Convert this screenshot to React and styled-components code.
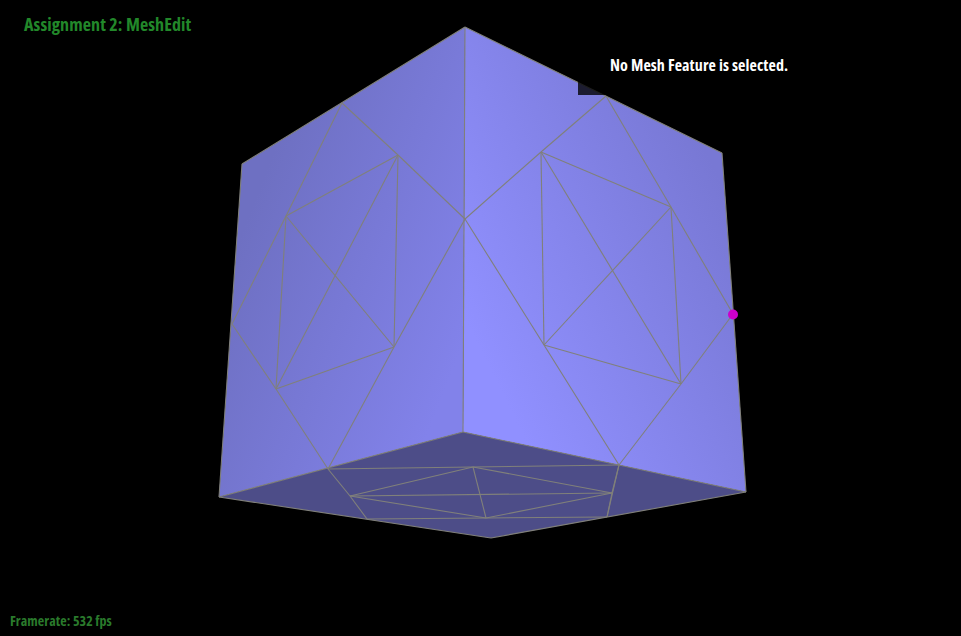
import React from "react";
import styled, { createGlobalStyle } from "styled-components";

const W = 961;
const H = 636;

const GlobalStyle = createGlobalStyle`
	html, body {
		margin: 0;
		padding: 0;
		background: #000;
	}
`;

const Stage = styled.div`
	position: relative;
	width: ${W}px;
	height: ${H}px;
	overflow: hidden;
	background: #000;
	font-family: "Open Sans", "Noto Sans", sans-serif;
	font-weight: 700;
	font-stretch: condensed;
`;

const Viewport = styled.svg`
	display: block;
`;

const Title = styled.h1`
	position: absolute;
	left: 24px;
	top: 12px;
	margin: 0;
	font-size: 18px;
	line-height: 24px;
	font-weight: 700;
	letter-spacing: 0.1px;
	color: #22882a;
	white-space: nowrap;
`;

const Framerate = styled.div`
	position: absolute;
	left: 10px;
	bottom: 6px;
	font-size: 14px;
	line-height: 18px;
	letter-spacing: 0.05px;
	color: #2a7a2c;
	white-space: nowrap;
`;

const InfoPanel = styled.div`
	position: absolute;
	left: 578px;
	top: 40px;
	width: 340px;
	height: 55px;
	box-sizing: border-box;
	padding: 14px 0 0 32px;
	background: rgba(0, 0, 0, 0.78);
	font-size: 16px;
	line-height: 22px;
	letter-spacing: 0.1px;
	color: #fff;
	white-space: nowrap;
`;

const v = {
	A: [465, 27], B: [242, 164], C: [219, 497], D: [463, 432],
	E: [722, 153], F: [746, 492], G: [491, 538],
	P1: [342, 103], P2: [398, 155], P3: [465, 219], P4: [286, 216],
	P6: [232, 324], P7: [276, 389], P8: [394, 347], P9: [328, 469],
	Q1: [606, 96], Q2: [541, 152], Q3: [671, 207], Q5: [544, 345],
	Q6: [681, 384], Q7: [733, 314], Q8: [619, 465],
	R1: [350, 496], R2: [367, 519], R3: [473, 467], R4: [486, 518],
	R5: [612, 493], R6: [607, 517],
};

const FACES = [
	{ pts: ["A", "B", "C", "D"], fill: "url(#leftFace)" },
	{ pts: ["A", "E", "F", "D"], fill: "url(#rightFace)" },
	{ pts: ["C", "D", "F", "G"], fill: "#4d4d88" },
];

const EDGES = [
	"A-B", "B-C", "C-D", "D-A", "A-E", "E-F", "F-D", "C-G", "G-F",
	"P1-P2", "P2-P3", "P1-P4", "P4-P2", "P4-P6", "P4-P7", "P4-P8", "P2-P7", "P2-P8",
	"P6-P7", "P7-P8", "P7-P9", "P8-P9", "P8-P3",
	"Q1-Q2", "Q2-P3", "Q1-Q3", "Q2-Q3", "Q2-Q5", "Q2-Q6", "Q3-Q5", "Q3-Q6", "Q3-Q7",
	"Q5-Q6", "Q6-Q7", "Q6-Q8", "Q5-Q8", "Q5-P3",
	"P9-R3", "R3-Q8", "P9-R1", "R1-R2", "R1-R3", "R1-R5", "R1-R4", "R2-R4", "R4-R6",
	"R3-R4", "R3-R5", "R4-R5", "R5-R6", "Q8-R5", "Q8-R6",
];

const Mesh = () => (
	<Viewport width={W} height={H} viewBox={`0 0 ${W} ${H}`}>
		<defs>
			<linearGradient id="leftFace" gradientUnits="userSpaceOnUse" x1="235" y1="250" x2="465" y2="340">
				<stop offset="0" stopColor="#6e70c2" />
				<stop offset="1" stopColor="#8282ea" />
			</linearGradient>
			<linearGradient id="rightFace" gradientUnits="userSpaceOnUse" x1="470" y1="330" x2="730" y2="200">
				<stop offset="0" stopColor="#9090ff" />
				<stop offset="1" stopColor="#7878d4" />
			</linearGradient>
		</defs>
		{FACES.map((face) => (
			<polygon key={face.pts.join("")} points={face.pts.map((k) => v[k].join(",")).join(" ")} fill={face.fill} />
		))}
		{EDGES.map((edge) => {
			const [a, b] = edge.split("-");
			return (
				<line
					key={edge}
					x1={v[a][0]}
					y1={v[a][1]}
					x2={v[b][0]}
					y2={v[b][1]}
					stroke="#80807a"
					strokeWidth="1.1"
				/>
			);
		})}
		<circle cx={v.Q7[0]} cy={v.Q7[1] + 0.5} r="5" fill="#cc00cc" />
	</Viewport>
);

export default function App() {
	return (
		<Stage>
			<GlobalStyle />
			<Mesh />
			<Title>Assignment 2: MeshEdit</Title>
			<InfoPanel>No Mesh Feature is selected.</InfoPanel>
			<Framerate>Framerate: 532 fps</Framerate>
		</Stage>
	);
}
